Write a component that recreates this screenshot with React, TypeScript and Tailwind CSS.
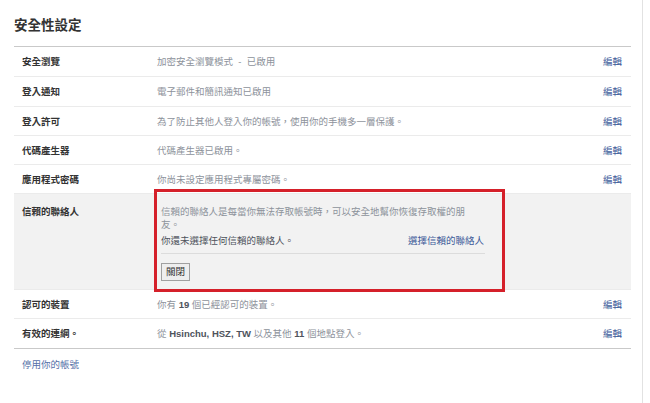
import React from "react";

const FONT = '"Liberation Sans", "Noto Sans CJK TC", sans-serif';

type Row = { label: string; value: React.ReactNode; h: string; last?: boolean };

function Edit() {
  return <a className="text-[#3b5998] whitespace-nowrap">編輯</a>;
}

function SimpleRow({ label, value, h, last }: Row) {
  return (
    <div
      className={`flex items-center ${h} border-b ${last ? "border-[#c9c9c9]" : "border-[#ebebeb]"} pr-[9px]`}
    >
      <div className="w-[143px] pl-[8px] font-bold text-[#333333] shrink-0">{label}</div>
      <div className="flex-1 text-[#8d929b]">{value}</div>
      <Edit />
    </div>
  );
}

export default function App() {
  return (
    <div
      lang="zh-Hant-TW"
      className="w-[643px] h-[403px] border-r border-[#e2e2e2] bg-white pl-[14px] pr-[11px] text-[9.5px] leading-[13px]"
      style={{ fontFamily: FONT }}
    >
      <div className="h-[47px] border-b border-[#c9c9c9] pt-[17px]">
        <h1 className="text-[13.5px] leading-[18px] font-bold text-[#333333]">安全性設定</h1>
      </div>

      <SimpleRow label="安全瀏覽" value={<>加密安全瀏覽模式&nbsp; -&nbsp; 已啟用</>} h="h-[30px]" />
      <SimpleRow label="登入通知" value="電子郵件和簡訊通知已啟用" h="h-[30px]" />
      <SimpleRow label="登入許可" value="為了防止其他人登入你的帳號，使用你的手機多一層保護。" h="h-[29px]" />
      <SimpleRow label="代碼產生器" value="代碼產生器已啟用。" h="h-[29px]" />
      <SimpleRow label="應用程式密碼" value="你尚未設定應用程式專屬密碼。" h="h-[29px]" />

      <div className="relative flex h-[96px] border-b border-[#ebebeb] bg-[#f2f2f2] pt-[11px]">
        <div className="w-[143px] pl-[8px] font-bold text-[#333333] shrink-0">信賴的聯絡人</div>
        <div className="w-[328px] pl-[4px]">
          <p className="text-[#8d929b]">
            信賴的聯絡人是每當你無法存取帳號時，可以安全地幫你恢復存取權的朋
            <br />
            友。
          </p>
          <div className="mt-[3px] flex justify-between border-b border-[#dcdcdc] pb-[6px]">
            <span className="text-[#4e535c]">你還未選擇任何信賴的聯絡人。</span>
            <a className="text-[#3b5998] pr-[1px]">選擇信賴的聯絡人</a>
          </div>
          <button className="mt-[9px] h-[18px] px-[4px] border border-[#a0a0a0] bg-[#eeeeee] text-[#333333] leading-[16px]">
            關閉
          </button>
        </div>
        <div className="pointer-events-none absolute left-[140px] top-[-5px] w-[351px] h-[103px] border-[3px] border-[#d5202a]" />
      </div>

      <SimpleRow
        label="認可的裝置"
        value={
          <>
            你有 <b className="text-[#4e535c]">19</b> 個已經認可的裝置。
          </>
        }
        h="h-[29px]"
      />
      <SimpleRow
        label="有效的連網。"
        value={
          <>
            從 <b className="text-[#4e535c]">Hsinchu, HSZ, TW</b> 以及其他 <b className="text-[#4e535c]">11</b> 個地點登入。
          </>
        }
        h="h-[30px]"
        last
      />

      <div className="mt-[9px] pl-[8px]">
        <a className="text-[#5470a8]">停用你的帳號</a>
      </div>
    </div>
  );
}
